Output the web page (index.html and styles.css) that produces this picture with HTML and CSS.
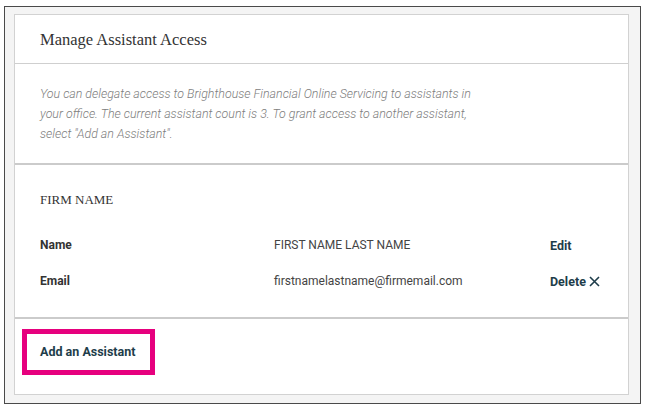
FILE: index.html
```html
<!DOCTYPE html>
<html lang="en">
<head>
  <meta charset="UTF-8">
  <meta name="viewport" content="width=device-width, initial-scale=1">
  <title>Manage Assistant Access</title>
  <link rel="stylesheet" href="styles.css">
</head>
<body>

  <div class="frame">
    <div class="card">
      <div class="card-header">
        <h2>Manage Assistant Access</h2>
      </div>

      <div class="intro">
        <p>You can delegate access to Brighthouse Financial Online Servicing to assistants in your office. The current assistant count is 3. To grant access to another assistant, select "Add an Assistant".</p>
      </div>

      <div class="firm">
        <h3>FIRM NAME</h3>
        <div class="row">
          <span class="label">Name</span>
          <span class="value">FIRST NAME LAST NAME</span>
          <a class="action" href="#">Edit</a>
        </div>
        <div class="row">
          <span class="label">Email</span>
          <span class="value">firstnamelastname@firmemail.com</span>
          <a class="action" href="#">Delete
            <svg width="11" height="11" viewBox="0 0 11 11"><path d="M1 1L10 10M10 1L1 10" stroke="#1e3d4a" stroke-width="1.6" fill="none"/></svg>
          </a>
        </div>
      </div>

      <div class="card-footer">
        <a class="add-btn" href="#">Add an Assistant</a>
      </div>
    </div>
  </div>

</body>
</html>
```

FILE: styles.css
```css
body {
  margin: 0;
  background: #fff;
  font-family: Roboto, sans-serif;
}
.frame {
  box-sizing: border-box;
  width: 637px;
  height: 398px;
  margin: 6px 0 0 4px;
  padding: 7px 11px 8px 9px;
  border: 1px solid #4a4a4a;
  background: #f4f4f4;
}
.card {
  box-sizing: border-box;
  height: 100%;
  background: #fff;
  border: 1px solid #d2d2d2;
}
.card-header {
  height: 49px;
  display: flex;
  align-items: center;
  padding: 2px 0 0 25px;
  box-sizing: border-box;
  border-bottom: 1px solid #cfcfcf;
}
.card-header h2 {
  margin: 0;
  font-family: "Liberation Serif", serif;
  font-weight: normal;
  font-size: 16.5px;
  color: #333;
}
.intro {
  height: 101px;
  padding: 20px 25px 0;
  box-sizing: border-box;
  border-bottom: 2px solid #cbcbcb;
}
.intro p {
  margin: 0;
  max-width: 445px;
  font-size: 12.4px;
  font-style: italic;
  font-weight: 300;
  line-height: 20px;
  color: #7d7d7d;
}
.firm {
  height: 154px;
  box-sizing: border-box;
  padding: 27px 25px 0;
  border-bottom: 2px solid #cbcbcb;
}
.firm h3 {
  margin: 0 0 19px;
  font-family: "Liberation Serif", serif;
  font-weight: normal;
  font-size: 13px;
  color: #333;
  line-height: 16px;
}
.row {
  display: grid;
  grid-template-columns: 234px 276px auto;
  align-items: center;
  height: 36px;
  font-size: 12px;
}
.label {
  font-weight: bold;
  color: #333;
}
.value {
  color: #444;
}
.action {
  font-weight: bold;
  font-size: 12.5px;
  color: #1e3d4a;
  text-decoration: none;
  display: flex;
  align-items: center;
  gap: 3px;
}
.card-footer {
  padding: 10px 7px 0;
}
.add-btn {
  display: inline-block;
  box-sizing: border-box;
  width: 133px;
  height: 46px;
  padding-left: 13px;
  line-height: 36px;
  border: 5px solid #e6007e;
  font-weight: bold;
  font-size: 12.5px;
  color: #1e3d4a;
  text-decoration: none;
}
```
